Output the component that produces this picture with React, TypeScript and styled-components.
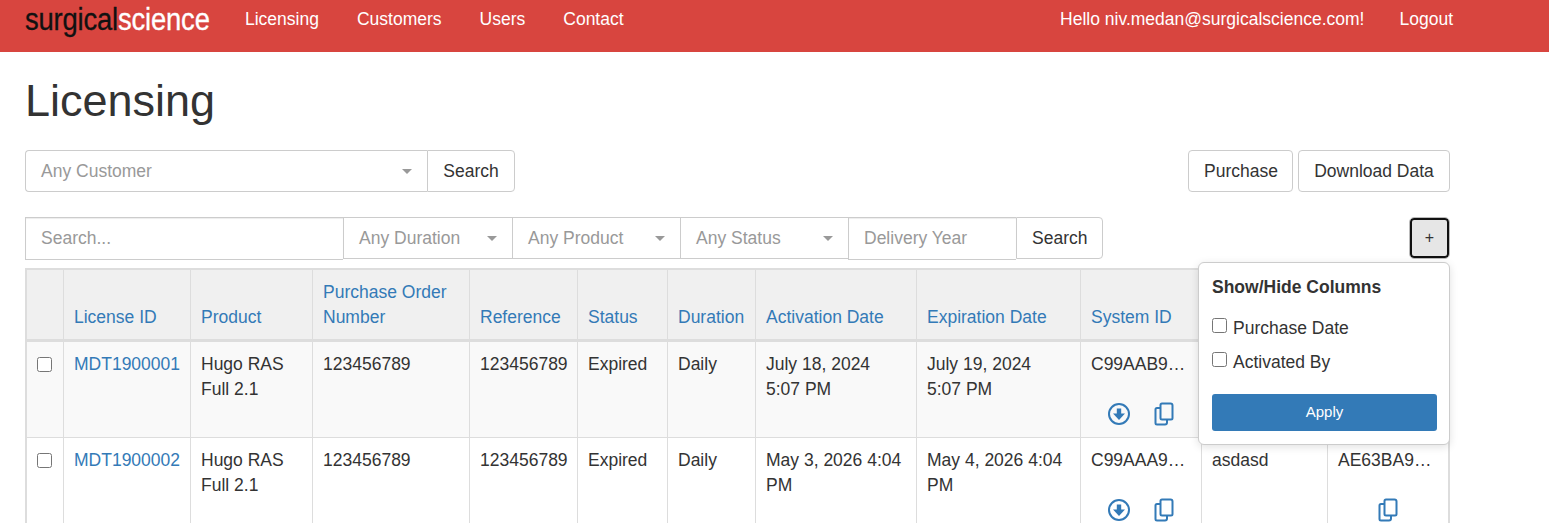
import React from "react";
import styled, {createGlobalStyle} from "styled-components";

const GlobalStyle = createGlobalStyle`
	html, body {
		margin: 0;
		padding: 0;
		background: #fff;
		color: #333;
		font-family: "Liberation Sans", Arial, sans-serif;
		font-size: 17.5px;
		line-height: 25px;
	}
	* {
		box-sizing: border-box;
	}
`;

const Page = styled.div`
	position: relative;
	height: 523px;
	overflow: hidden;
`;

const NavBar = styled.nav`
	display: flex;
	align-items: flex-start;
	height: 52px;
	padding: 6px 96px 0 25px;
	background: #d8453f;
`;

const Logo = styled.div`
	width: 220px;
	height: 28px;
	flex: none;
	font-size: 31px;
	line-height: 28px;
	letter-spacing: -0.2px;
	transform: scaleX(0.884);
	transform-origin: left center;
	white-space: nowrap;
	color: #111;
	-webkit-text-stroke: 0.3px currentColor;
	span {
		color: #fff;
	}
`;

const NavLinks = styled.div`
	display: flex;
	gap: 38px;
`;

const UserLinks = styled.div`
	display: flex;
	gap: 35px;
	margin-left: auto;
`;

const NavLink = styled.a`
	color: #fff;
	line-height: 26px;
`;

const Content = styled.main`
	width: 1425px;
	margin-left: 25px;
`;

const Title = styled.h1`
	margin: 0;
	padding-top: 24px;
	height: 98px;
	font-size: 45px;
	line-height: 50px;
	font-weight: 400;
`;

const TopRow = styled.div`
	display: flex;
	justify-content: space-between;
	height: 42px;
`;

const InputGroup = styled.div`
	display: flex;
`;

const SelectBox = styled.div<{$width: number; $filter?: boolean}>`
	display: flex;
	align-items: center;
	justify-content: space-between;
	width: ${p => p.$width}px;
	height: 42px;
	padding: ${p => (p.$filter ? "1px" : "0")} 15px 0;
	border: 1px solid #ccc;
	border-right: 0;
	background: #fff;
	color: #999;
	&:first-child {
		border-radius: 4px 0 0 4px;
	}
	&::after {
		content: "";
		border-top: 5px solid #999;
		border-left: 5px solid transparent;
		border-right: 5px solid transparent;
	}
`;

const TextField = styled.div<{$width: number}>`
	display: flex;
	align-items: center;
	width: ${p => p.$width}px;
	height: 43px;
	padding: 0 15px;
	border: 1px solid #ccc;
	border-right: 0;
	box-shadow: inset 0 1px 1px rgba(0, 0, 0, 0.075);
	color: #999;
`;

const Button = styled.button<{$width?: number}>`
	width: ${p => (p.$width ? `${p.$width}px` : "auto")};
	height: 42px;
	padding: 0 15px;
	border: 1px solid #ccc;
	border-radius: 4px;
	background: #fff;
	color: #333;
	font: inherit;
`;

const GroupButton = styled(Button)<{$filter?: boolean}>`
	border-radius: 0 4px 4px 0;
	padding-top: ${p => (p.$filter ? "1px" : "0")};
`;

const ActionButtons = styled.div`
	display: flex;
	gap: 5px;
`;

const FilterRow = styled.div`
	display: flex;
	justify-content: space-between;
	align-items: flex-start;
	height: 51px;
	margin-top: 25px;
`;

const PlusButton = styled.button`
	width: 39px;
	height: 40px;
	margin: 1px 1px 0 0;
	border: 2px solid #111;
	border-radius: 4px;
	outline: 1px solid #bbb;
	background: #e6e6e6;
	color: #333;
	font: 16px/1 "Liberation Sans", Arial, sans-serif;
	padding: 0;
`;

const Table = styled.table`
	width: 1424px;
	table-layout: fixed;
	border-collapse: collapse;
	border: 2px solid #ddd;
`;

const HeadCell = styled.th`
	height: 71px;
	padding: 6px 10px 9px 10.5px;
	border: 1px solid #ddd;
	border-bottom: 3px solid #ddd;
	background: #f0f0f0;
	color: #337ab7;
	font-weight: 400;
	text-align: left;
	vertical-align: bottom;
`;

const Cell = styled.td`
	padding: 10px 10px 10px 10.5px;
	border: 1px solid #ddd;
	vertical-align: top;
	overflow: hidden;
`;

const Row = styled.tr<{$odd?: boolean}>`
	height: 97px;
	background: ${p => (p.$odd ? "#f9f9f9" : "#fff")};
`;

const RowLink = styled.a`
	color: #337ab7;
`;

const RowCheck = styled.input.attrs({type: "checkbox"})`
	display: block;
	width: 15px;
	height: 15px;
	margin: 5px 0 0 -0.5px;
`;

const Truncated = styled.div`
	white-space: nowrap;
`;

const IconRow = styled.div<{$pair?: boolean}>`
	display: flex;
	justify-content: center;
	gap: 21px;
	margin-top: 25px;
	padding-left: ${p => (p.$pair ? "2px" : "0")};
	color: #337ab7;
	svg {
		display: block;
	}
`;

const Popover = styled.div`
	position: absolute;
	left: 1198px;
	top: 262px;
	width: 252px;
	height: 183px;
	padding: 12px 13px;
	border: 1px solid #ccc;
	border-radius: 6px;
	background: #fff;
	box-shadow: 0 2px 8px rgba(0, 0, 0, 0.12);
`;

const PopoverTitle = styled.div`
	height: 36px;
	font-size: 17.5px;
	font-weight: 700;
`;

const OptionRow = styled.label`
	display: flex;
	align-items: center;
	gap: 6px;
	height: 34px;
	input {
		width: 15px;
		height: 15px;
		margin: 0 0 6px;
	}
`;

const ApplyButton = styled.button`
	display: block;
	width: 225px;
	height: 37px;
	margin-top: 15px;
	padding: 0 0 2px;
	border: 0;
	border-radius: 3px;
	background: #337ab7;
	color: #fff;
	font: 15px "Liberation Sans", Arial, sans-serif;
`;

const DownloadIcon = () => (
	<svg width="24" height="24" viewBox="0 0 24 24" fill="none">
		<circle cx="12" cy="12" r="10" stroke="currentColor" strokeWidth="2" />
		<path d="M9.8 6.5h4.4v5H18L12 18l-6-6.500h3.800z" fill="currentColor" />
	</svg>
);

const CopyIcon = () => (
	<svg width="24" height="24" viewBox="0 0 24 24" fill="none" stroke="currentColor" strokeWidth="2" strokeLinejoin="round">
		<path d="M10 1.500h8.500a2 2 0 0 1 2 2V16a1.500 1.500 0 0 1-1.500 1.500H10A1.500 1.500 0 0 1 8.500 16V3A1.500 1.500 0 0 1 10 1.500z" />
		<path d="M8.500 6H5A1.500 1.500 0 0 0 3.500 7.500V21A1.500 1.500 0 0 0 5 22.500h8a2 2 0 0 0 2-2v-3" />
	</svg>
);

const columns = [37, 127, 122, 157, 108, 90, 88, 161, 164, 121, 126, 122];
const headers = ["", "License ID", "Product", "Purchase Order Number", "Reference", "Status", "Duration", "Activation Date", "Expiration Date", "System ID", "", ""];

const rows = [
	{id: "MDT1900001", activation: "July 18, 2024 5:07 PM", expiration: "July 19, 2024 5:07 PM", system: "C99AAB9…", note: "", key: ""},
	{id: "MDT1900002", activation: "May 3, 2026 4:04 PM", expiration: "May 4, 2026 4:04 PM", system: "C99AAA9…", note: "asdasd", key: "AE63BA9…"}
];

export default function App() {
	return (
		<Page>
			<GlobalStyle />
			<NavBar>
				<Logo>surgical<span>science</span></Logo>
				<NavLinks>
					<NavLink>Licensing</NavLink>
					<NavLink>Customers</NavLink>
					<NavLink>Users</NavLink>
					<NavLink>Contact</NavLink>
				</NavLinks>
				<UserLinks>
					<NavLink>Hello niv.medan@surgicalscience.com!</NavLink>
					<NavLink>Logout</NavLink>
				</UserLinks>
			</NavBar>
			<Content>
				<Title>Licensing</Title>
				<TopRow>
					<InputGroup>
						<SelectBox $width={402}>Any Customer</SelectBox>
						<GroupButton $width={88}>Search</GroupButton>
					</InputGroup>
					<ActionButtons>
						<Button $width={105}>Purchase</Button>
						<Button $width={152}>Download Data</Button>
					</ActionButtons>
				</TopRow>
				<FilterRow>
					<InputGroup>
						<TextField $width={318}>Search...</TextField>
						<SelectBox $filter $width={169}>Any Duration</SelectBox>
						<SelectBox $filter $width={168}>Any Product</SelectBox>
						<SelectBox $filter $width={168}>Any Status</SelectBox>
						<TextField $width={168}>Delivery Year</TextField>
						<GroupButton $filter $width={87}>Search</GroupButton>
					</InputGroup>
					<PlusButton>+</PlusButton>
				</FilterRow>
				<Table>
					<colgroup>
						{columns.map((width, i) => <col key={i} style={{width}} />)}
					</colgroup>
					<thead>
						<tr>
							{headers.map((header, i) => <HeadCell key={i}>{header}</HeadCell>)}
						</tr>
					</thead>
					<tbody>
						{rows.map((row, i) => (
							<Row key={row.id} $odd={i === 0}>
								<Cell><RowCheck /></Cell>
								<Cell><RowLink>{row.id}</RowLink></Cell>
								<Cell>Hugo RAS Full 2.1</Cell>
								<Cell>123456789</Cell>
								<Cell>123456789</Cell>
								<Cell>Expired</Cell>
								<Cell>Daily</Cell>
								<Cell>{row.activation}</Cell>
								<Cell>{row.expiration}</Cell>
								<Cell>
									<Truncated>{row.system}</Truncated>
									<IconRow $pair><DownloadIcon /><CopyIcon /></IconRow>
								</Cell>
								<Cell>{row.note}</Cell>
								<Cell>
									<Truncated>{row.key}</Truncated>
									{row.key && <IconRow><CopyIcon /></IconRow>}
								</Cell>
							</Row>
						))}
					</tbody>
				</Table>
			</Content>
			<Popover>
				<PopoverTitle>Show/Hide Columns</PopoverTitle>
				<OptionRow><input type="checkbox" />Purchase Date</OptionRow>
				<OptionRow><input type="checkbox" />Activated By</OptionRow>
				<ApplyButton>Apply</ApplyButton>
			</Popover>
		</Page>
	);
}
